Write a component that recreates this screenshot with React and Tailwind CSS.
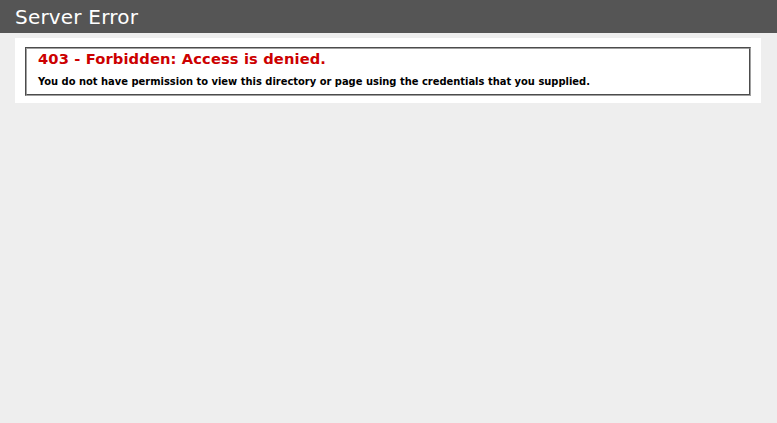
import React from 'react';

const App = () => {
  return (
    <div className="min-h-[423px] bg-[#eeeeee] font-['DejaVu_Sans',Verdana,sans-serif]">
      <div className="h-[33px] bg-[#555555] pl-[15px] flex items-center">
        <h1 className="text-[20px] leading-none text-white font-normal tracking-[0.2px]">Server Error</h1>
      </div>
      <div className="ml-[15px] mt-[5px] w-[746px] bg-white p-[9px_10px_7px_10px]">
        <fieldset className="border-2 border-[#a0a0a0] [border-style:groove] px-[11px] pt-[1px] pb-[8px] h-[49px]">
          <h2 className="text-[14.7px] leading-[18px] font-bold text-[#cc0000] tracking-[0.12px]">403 - Forbidden: Access is denied.</h2>
          <h3 className="mt-[7px] text-[9.93px] leading-[13px] font-bold text-black">
            You do not have permission to view this directory or page using the credentials that you supplied.
          </h3>
        </fieldset>
      </div>
    </div>
  );
};

export default App;
